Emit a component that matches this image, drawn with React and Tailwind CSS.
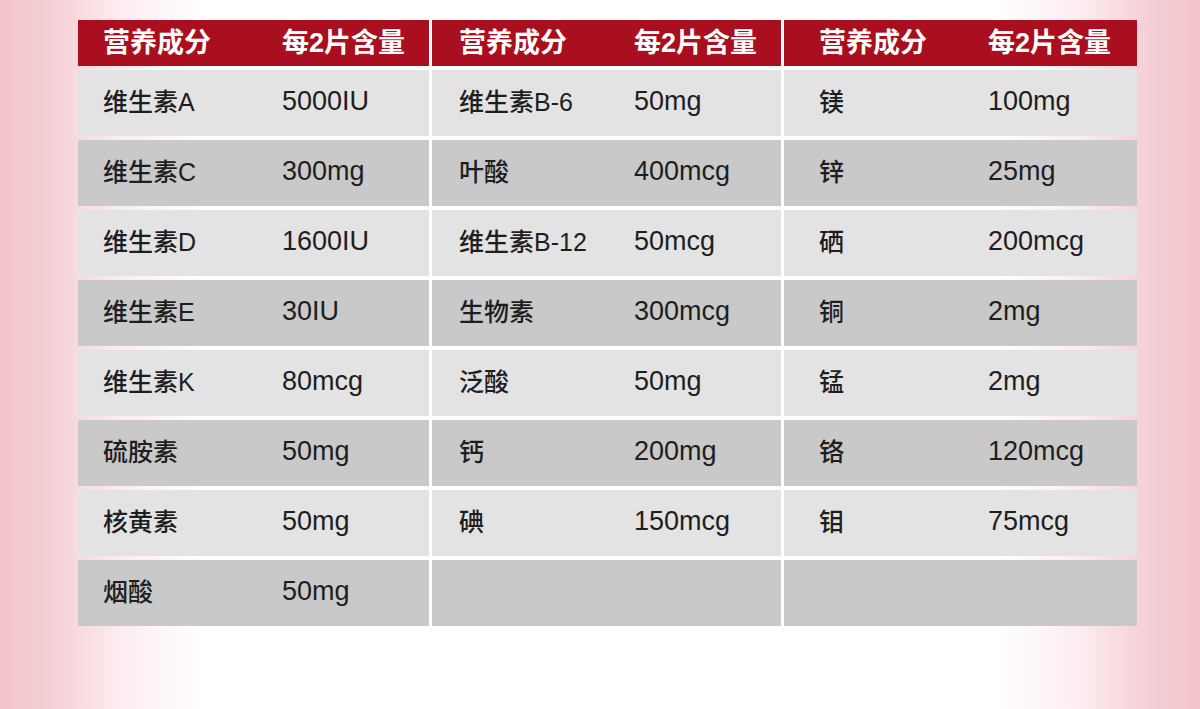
import React from "react";

const groups = [
  {
    pl: "pl-[25px]",
    vx: "w-[179px]",
    rows: [
      ["维生素A", "5000IU"],
      ["维生素C", "300mg"],
      ["维生素D", "1600IU"],
      ["维生素E", "30IU"],
      ["维生素K", "80mcg"],
      ["硫胺素", "50mg"],
      ["核黄素", "50mg"],
      ["烟酸", "50mg"],
    ],
  },
  {
    pl: "pl-[27px]",
    vx: "w-[175px]",
    rows: [
      ["维生素B-6", "50mg"],
      ["叶酸", "400mcg"],
      ["维生素B-12", "50mcg"],
      ["生物素", "300mcg"],
      ["泛酸", "50mg"],
      ["钙", "200mg"],
      ["碘", "150mcg"],
      ["", ""],
    ],
  },
  {
    pl: "pl-[35px]",
    vx: "w-[169px]",
    rows: [
      ["镁", "100mg"],
      ["锌", "25mg"],
      ["硒", "200mcg"],
      ["铜", "2mg"],
      ["锰", "2mg"],
      ["铬", "120mcg"],
      ["钼", "75mcg"],
      ["", ""],
    ],
  },
];

export default function App() {
  return (
    <div
      className="w-[1200px] h-[709px] overflow-hidden bg-[linear-gradient(to_right,#f2c4cb_0%,#f6d2d8_5%,#fcecef_10%,#ffffff_17%,#ffffff_83%,#fcecef_90%,#f6d2d8_95%,#f2c4cb_100%)]"
      style={{ fontFamily: '"Liberation Sans", "Noto Sans CJK SC", sans-serif' }}
    >
      <div className="pt-[20px] pl-[78px]">
        <div className="grid grid-cols-[351px_349px_353px] gap-x-[3px] w-[1059px]">
          {groups.map((g, gi) => (
            <div key={gi} className="flex flex-col gap-[4px]">
              <div className={`h-[46px] bg-[#a90f1e] flex items-center ${g.pl} text-white font-bold text-[27px] leading-none`}>
                <span className={g.vx}>营养成分</span>
                <span>每2片含量</span>
              </div>
              {g.rows.map((r, ri) => (
                <div
                  key={ri}
                  className={`h-[66px] flex items-center ${g.pl} text-[#1e1e1e] leading-none ${
                    ri % 2 === 0 ? "bg-[#e3e3e3]" : "bg-[#c9c9c9]"
                  }`}
                >
                  <span className={`${g.vx} text-[25px] font-medium -mt-[2px]`}>{r[0]}</span>
                  <span className="-mt-[4px] text-[27px]">{r[1]}</span>
                </div>
              ))}
            </div>
          ))}
        </div>
      </div>
    </div>
  );
}
